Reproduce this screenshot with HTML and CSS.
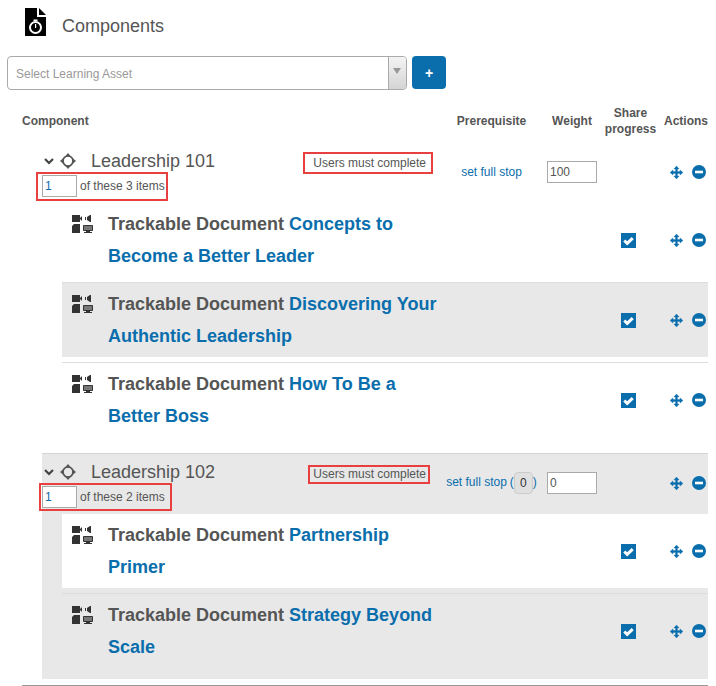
FILE: index.html
```html
<!DOCTYPE html>
<html lang="en">
<head>
    <meta charset="UTF-8">
    <title>Components</title>
    <link rel="stylesheet" href="styles.css">
</head>
<body>

<svg class="sprites" width="0" height="0">
    <symbol id="i-move" viewBox="0 0 14 14">
        <path fill="currentColor" stroke="currentColor" stroke-width=".4" d="M7 0l2.800 3.200H8V6h2.800V4.200L14 7l-3.200 2.800V8H8v2.800h1.800L7 14l-2.800-3.200H6V8H3.200v1.800L0 7l3.200-2.800V6H6V3.200H4.200z"/>
    </symbol>
    <symbol id="i-minus" viewBox="0 0 14 14">
        <circle cx="7" cy="7" r="7" fill="currentColor"/>
        <rect x="3" y="5.700" width="8" height="2.600" fill="#fff"/>
    </symbol>
    <symbol id="i-check" viewBox="0 0 15 15">
        <rect width="15" height="15" fill="currentColor"/>
        <path d="M3.300 7.500l2.900 2.900 5.500-5.300" fill="none" stroke="#fff" stroke-width="3"/>
    </symbol>
    <symbol id="i-media" viewBox="0 0 21 18">
        <path fill="#333" d="M0 0h8v7H0zM8 3l2-2v5L8 4z"/>
        <path fill="#333" d="M13 2h1v3h-1zM15 2l3-2h1v7h-1l-3-2z"/>
        <path fill="#333" d="M2 9h6v9H0v-7z"/>
        <path fill="#777" stroke="#333" d="M11.500 10.500h9v5h-9z"/>
        <path fill="#333" d="M14 16h4v1h2v1h-8v-1h2z"/>
    </symbol>
    <symbol id="i-target" viewBox="0 0 16 16">
        <circle cx="8" cy="8" r="5" fill="none" stroke="currentColor" stroke-width="1.700"/>
        <path fill="currentColor" d="M8 0l3 3.500H5zM8 16l-3-3.500h6zM0 8l3.500-3v6zM16 8l-3.500 3V5z"/>
    </symbol>
    <symbol id="i-chevron" viewBox="0 0 10 7">
        <path d="M1 1l4 4 4-4" fill="none" stroke="currentColor" stroke-width="2.200"/>
    </symbol>
</svg>

<div class="page">
    <header class="page-title">
        <svg class="title-icon" viewBox="0 0 21 28">
            <path fill="#000" d="M0 0h12v9h9v19H0z"/>
            <path fill="#000" d="M14 0l7 7h-7z"/>
            <circle cx="10.500" cy="19.500" r="5.500" fill="none" stroke="#fff" stroke-width="2"/>
            <path fill="#fff" d="M8.500 11.500h4v1.500h-4zM10 16h1.200v4H10z"/>
        </svg>
        <h1>Components</h1>
    </header>

    <div class="asset-bar">
        <div class="asset-select">
            <span class="asset-placeholder">Select Learning Asset</span>
            <span class="asset-arrow"></span>
        </div>
        <button class="add-btn" type="button">+</button>
    </div>

    <div class="table-head">
        <div>Component</div>
        <div class="center">Prerequisite</div>
        <div class="center weight-head">Weight</div>
        <div class="center">Share<br>progress</div>
        <div>Actions</div>
    </div>

    <section class="group">
        <div class="group-head">
            <div class="group-name">
                <div class="name-row">
                    <svg class="chevron"><use href="#i-chevron"/></svg>
                    <svg class="target"><use href="#i-target"/></svg>
                    <span class="name-text">Leadership 101</span>
                    <span class="must must-first">Users must complete</span>
                </div>
                <div class="count count-first">
                    <input class="count-input" type="text" value="1">
                    <span>of these 3 items</span>
                </div>
            </div>
            <div class="prereq"><a href="#">set full stop</a></div>
            <div class="weight"><input class="weight-input" type="text" value="100"></div>
            <div></div>
            <div class="actions">
                <svg class="act-move"><use href="#i-move"/></svg>
                <svg class="act-minus"><use href="#i-minus"/></svg>
            </div>
        </div>

        <div class="item">
            <div class="item-name">
                <svg class="media"><use href="#i-media"/></svg>
                <div class="item-text">Trackable Document <a href="#">Concepts to Become a Better Leader</a></div>
            </div>
            <svg class="check"><use href="#i-check"/></svg>
            <div class="actions">
                <svg class="act-move"><use href="#i-move"/></svg>
                <svg class="act-minus"><use href="#i-minus"/></svg>
            </div>
        </div>
        <div class="item item-shaded">
            <div class="item-name">
                <svg class="media"><use href="#i-media"/></svg>
                <div class="item-text">Trackable Document <a href="#">Discovering Your Authentic Leadership</a></div>
            </div>
            <svg class="check"><use href="#i-check"/></svg>
            <div class="actions">
                <svg class="act-move"><use href="#i-move"/></svg>
                <svg class="act-minus"><use href="#i-minus"/></svg>
            </div>
        </div>
        <div class="item">
            <div class="item-name">
                <svg class="media"><use href="#i-media"/></svg>
                <div class="item-text">Trackable Document <a href="#">How To Be a Better Boss</a></div>
            </div>
            <svg class="check"><use href="#i-check"/></svg>
            <div class="actions">
                <svg class="act-move"><use href="#i-move"/></svg>
                <svg class="act-minus"><use href="#i-minus"/></svg>
            </div>
        </div>
    </section>

    <section class="group group-shaded">
        <div class="group-head">
            <div class="group-name">
                <div class="name-row">
                    <svg class="chevron"><use href="#i-chevron"/></svg>
                    <svg class="target"><use href="#i-target"/></svg>
                    <span class="name-text">Leadership 102</span>
                    <span class="must must-second">Users must complete</span>
                </div>
                <div class="count count-second">
                    <input class="count-input" type="text" value="1">
                    <span>of these 2 items</span>
                </div>
            </div>
            <div class="prereq"><a href="#">set full stop</a><span class="paren paren-open">(</span><span class="stop-count">0</span><span class="paren">)</span></div>
            <div class="weight"><input class="weight-input" type="text" value="0"></div>
            <div></div>
            <div class="actions">
                <svg class="act-move"><use href="#i-move"/></svg>
                <svg class="act-minus"><use href="#i-minus"/></svg>
            </div>
        </div>

        <div class="item item-white">
            <div class="item-name">
                <svg class="media"><use href="#i-media"/></svg>
                <div class="item-text">Trackable Document <a href="#">Partnership Primer</a></div>
            </div>
            <svg class="check"><use href="#i-check"/></svg>
            <div class="actions">
                <svg class="act-move"><use href="#i-move"/></svg>
                <svg class="act-minus"><use href="#i-minus"/></svg>
            </div>
        </div>
        <div class="item">
            <div class="item-name">
                <svg class="media"><use href="#i-media"/></svg>
                <div class="item-text">Trackable Document <a href="#">Strategy Beyond Scale</a></div>
            </div>
            <svg class="check"><use href="#i-check"/></svg>
            <div class="actions">
                <svg class="act-move"><use href="#i-move"/></svg>
                <svg class="act-minus"><use href="#i-minus"/></svg>
            </div>
        </div>
    </section>

    <div class="page-end"></div>
</div>

</body>
</html>
```

FILE: styles.css
```css
* {
    margin: 0;
    padding: 0;
    box-sizing: border-box;
}

body {
    font-family: 'Liberation Sans', Arial, sans-serif;
    font-size: 12px;
    color: #555;
    background-color: #fff;
}

a {
    color: #0a6ead;
    text-decoration: none;
}

svg {
    display: block;
    flex: none;
}

.sprites {
    position: absolute;
}

.page {
    padding-right: 8px;
}

.page-title {
    display: flex;
    height: 56px;
    padding: 8px 0 0 25px;
}

.title-icon {
    width: 21px;
    height: 28px;
}

.page-title h1 {
    margin: 7px 0 0 16px;
    font-size: 18px;
    line-height: 22px;
    font-weight: normal;
}

.asset-bar {
    display: flex;
    align-items: flex-start;
    margin-left: 7px;
}

.asset-select {
    display: flex;
    justify-content: space-between;
    width: 400px;
    height: 34px;
    border: 1px solid #aaa;
    border-radius: 4px;
    background-color: #fff;
}

.asset-placeholder {
    padding-left: 8px;
    line-height: 34px;
    color: #999;
}

.asset-arrow {
    position: relative;
    width: 18px;
    border-left: 1px solid #aaa;
    border-radius: 0 3px 3px 0;
    background: linear-gradient(#f4f4f4, #d4d4d4);
}

.asset-arrow::after {
    content: "";
    position: absolute;
    top: 11px;
    left: 4px;
    border-top: 6px solid #999;
    border-left: 4px solid transparent;
    border-right: 4px solid transparent;
}

.add-btn {
    width: 34px;
    height: 33px;
    margin-left: 5px;
    border: none;
    border-radius: 4px;
    background-color: #0a6ead;
    color: #fff;
    font-family: inherit;
    font-size: 14px;
    font-weight: bold;
}

.table-head {
    display: grid;
    grid-template-columns: 424px 91px 60px 67px 44px;
    align-items: center;
    margin-left: 22px;
    padding: 15px 0 5px;
    line-height: 16px;
    font-weight: bold;
}

.center {
    text-align: center;
}

.weight-head {
    padding-left: 10px;
}

.group {
    margin: 1px 0 5px 42px;
    padding-bottom: 11px;
}

.group-shaded {
    margin-top: 0;
    margin-bottom: 6px;
    border-top: 1px solid #d4d4d4;
    background-color: #e8e8e8;
}

.group-head {
    display: grid;
    grid-template-columns: 404px 91px 60px 67px 44px;
    align-items: start;
    height: 60px;
}

.group-name {
    min-width: 0;
}

.name-row {
    display: flex;
    align-items: flex-start;
    height: 22px;
    margin-top: 7px;
}

.chevron {
    width: 10px;
    height: 7px;
    margin: 8px 0 0 2px;
    color: #444;
}

.target {
    width: 16px;
    height: 16px;
    margin: 3px 0 0 6px;
    color: #555;
}

.name-text {
    margin-left: 15px;
    font-size: 18px;
    line-height: 22px;
}

.must {
    margin-left: auto;
    border: 2px solid #e8403f;
    white-space: nowrap;
}

.must-first {
    margin-top: 2px;
    margin-right: 13px;
    padding: 0 5px 0 8px;
    line-height: 18px;
}

.must-second {
    margin-top: 4px;
    margin-right: 16px;
    padding: 0 2px 0 3px;
    line-height: 15px;
}

.count {
    display: inline-flex;
    align-items: center;
    gap: 3px;
    border: 2px solid #e8403f;
}

.count-first {
    margin-left: -6px;
    padding: 1px 1px 2px 4px;
}

.count-second {
    margin-left: -3px;
    padding: 1px 5px 1px 1px;
}

.count-input {
    width: 35px;
    height: 22px;
    padding-left: 2px;
    border: 1px solid #aaa;
    background-color: #fff;
    color: #0a6ead;
    font-family: inherit;
    font-size: 12px;
}

.prereq {
    display: flex;
    align-items: center;
    justify-content: center;
    height: 22px;
    margin-top: 18px;
    white-space: nowrap;
}

.group-shaded .prereq a,
.paren {
    margin-bottom: 2px;
}

.paren {
    color: #0a6ead;
}

.paren-open {
    margin-left: 3px;
}

.stop-count {
    flex: none;
    width: 19px;
    height: 22px;
    border: 1px solid #ccc;
    border-radius: 4px;
    background-color: #e0e0e0;
    color: #333;
    line-height: 20px;
    text-align: center;
}

.weight {
    margin-top: 18px;
    padding-left: 10px;
}

.weight-input {
    width: 50px;
    height: 22px;
    padding-left: 2px;
    border: 1px solid #aaa;
    background-color: #fff;
    color: #555;
    font-family: inherit;
    font-size: 12px;
}

.actions {
    display: flex;
    align-items: center;
    height: 22px;
    padding-left: 6px;
}

.group-head .actions {
    margin-top: 18px;
}

.act-move {
    width: 13px;
    height: 13px;
    color: #0a6ead;
}

.act-minus {
    width: 14px;
    height: 14px;
    margin-left: 9px;
    color: #0a6ead;
}

.item {
    display: grid;
    grid-template-columns: 535px 67px 44px;
    align-items: center;
    margin-left: 20px;
    padding: 5px 0;
}

.item + .item {
    margin-top: 5px;
    border-top: 1px solid #ddd;
}

.item-shaded {
    background-color: #e8e8e8;
}

.item-white {
    background-color: #fff;
}

.item-name {
    display: flex;
    align-items: flex-start;
    padding-left: 10px;
}

.media {
    width: 21px;
    height: 18px;
    margin: 7px 15px 0 0;
}

.item-text {
    width: 336px;
    font-size: 18px;
    line-height: 32px;
    font-weight: bold;
}

.check {
    width: 15px;
    height: 15px;
    margin-left: 24px;
    color: #0a6ead;
}

.page-end {
    margin-left: 22px;
    border-top: 1px solid #999;
}
```
